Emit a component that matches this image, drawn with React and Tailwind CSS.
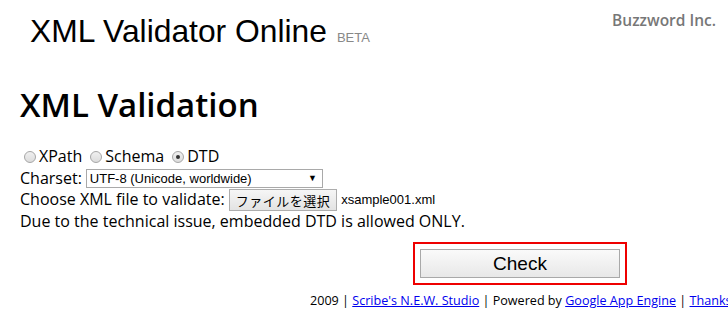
import { useState } from 'react';

const sans = { fontFamily: '"Open Sans", "Noto Sans CJK JP", sans-serif' };

const App = () => {
  const [mode, setMode] = useState('dtd');

  return (
    <div className="w-[728px] h-[320px] overflow-hidden bg-white text-black relative" style={sans}>
      {/* Header */}
      <div className="flex items-start justify-between h-[72px]">
        <div className="pl-[30px] pt-[12px] flex items-baseline gap-[10px] font-['Liberation_Sans',Arial,sans-serif]">
          <span className="text-[31.8px] leading-[38px]">XML Validator Online</span>
          <span className="text-[13px] text-[#888]">BETA</span>
        </div>
        <div className="pr-[12px] pt-[9px] text-[15.5px] font-semibold text-[#777]">Buzzword Inc.</div>
      </div>

      {/* Main */}
      <div className="pl-[20px]">
        <h1 className="text-[33px] font-semibold leading-[42px] mt-[12px] tracking-[0px]">XML Validation</h1>

        <form className="mt-[20px] text-[16px] leading-[21.5px]" onSubmit={(e) => e.preventDefault()}>
          <div className="flex items-center gap-[3px] pl-[4px]">
            {[
              ['xpath', 'XPath'],
              ['schema', 'Schema'],
              ['dtd', 'DTD'],
            ].map(([key, label]) => (
              <label key={key} className="flex items-center mr-[5px] cursor-pointer">
                <span
                  onClick={() => setMode(key)}
                  className="w-[12px] h-[12px] rounded-full border border-[#a6a6a6] bg-gradient-to-b from-[#f0f0f0] to-[#dcdcdc] flex items-center justify-center mr-[3px]"
                >
                  {mode === key && <span className="w-[4px] h-[4px] rounded-full bg-[#333]"></span>}
                </span>
                {label}
              </label>
            ))}
          </div>

          <div className="flex items-center">
            <span>Charset:</span>
            <div className="ml-[4px] w-[237px] h-[19px] border border-[#a9a9a9] bg-white flex items-center justify-between px-[3px] font-['Liberation_Sans',Arial,sans-serif] text-[13px] leading-none">
              <span>UTF-8 (Unicode, worldwide)</span>
              <span className="text-[9px] mr-[2px]">▼</span>
            </div>
          </div>

          <div className="flex items-center">
            <span>Choose XML file to validate:</span>
            <button
              type="button"
              className="ml-[4px] h-[22px] px-[6px] border border-[#adadad] bg-gradient-to-b from-[#f6f6f6] to-[#e3e3e3] text-[13px] tracking-[0.5px] leading-none"
              style={{ fontFamily: '"Noto Sans CJK JP", sans-serif' }}
            >
              ファイルを選択
            </button>
            <span className="ml-[4px] font-['Liberation_Sans',Arial,sans-serif] text-[13px]">xsample001.xml</span>
          </div>

          <div>Due to the technical issue, embedded DTD is allowed ONLY.</div>

          <div className="flex mt-[9px] ml-[393px]">
            <div className="border-2 border-[#ee0000] px-[5px] py-[5px]">
              <button
                type="submit"
                className="w-[200px] h-[29px] border border-[#a9a9a9] bg-gradient-to-b from-[#fafafa] to-[#e8e8e8] text-[19px] font-['Liberation_Sans',Arial,sans-serif] leading-none"
              >
                Check
              </button>
            </div>
          </div>
        </form>
      </div>

      {/* Footer */}
      <div className="absolute left-[310px] top-[292px] whitespace-nowrap text-[12.6px]">
        2009 | <a href="#" className="text-[#0000ee] underline">Scribe's N.E.W. Studio</a> | Powered by{' '}
        <a href="#" className="text-[#0000ee] underline">Google App Engine</a> |{' '}
        <a href="#" className="text-[#0000ee] underline">Thanks</a>
      </div>
    </div>
  );
};

export default App;
